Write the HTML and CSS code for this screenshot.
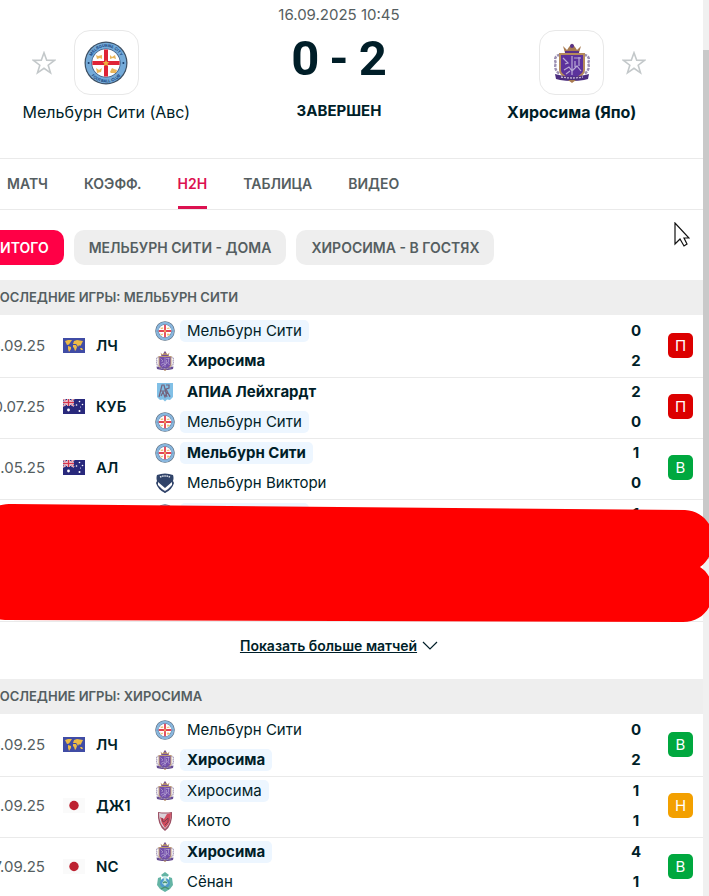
FILE: index.html
```html
<!DOCTYPE html>
<html lang="ru">
<head>
  <meta charset="UTF-8" />
  <meta name="viewport" content="width=device-width, initial-scale=1.0"/>
  <title>Мельбурн Сити - Хиросима</title>
  <link rel="stylesheet" href="styles.css">
</head>
<body>

  <!-- logos, flags and icons -->
  <svg class="sprite" aria-hidden="true">
    <symbol id="star" viewBox="0 0 24 24">
      <path d="M12 1.800l2.700 7.500 7.800.1-6.300 4.800 2.300 7.600-6.500-4.500-6.500 4.500 2.300-7.600-6.300-4.800 7.800-.1z" fill="none" stroke="#c3c8ca" stroke-width="1.600"/>
    </symbol>
    <symbol id="melbourne" viewBox="0 0 44 44">
      <circle cx="22" cy="22" r="21.5" fill="#3d4f63"/>
      <circle cx="22" cy="22" r="20.3" fill="#75abd9"/>
      <circle cx="22" cy="22" r="14.6" fill="#3f5b80"/>
      <circle cx="22" cy="22" r="13.8" fill="#fff"/>
      <path d="M20 8.4h4v27.2h-4zM8.4 20h27.2v4H8.4z" fill="#df2337"/>
      <path d="M12 14l2 1 4-1v4l-2-1-3 1zM26 14l2 2 3-2 1 4-3-1-3 1zM12 27l3 2 3-2-1 4-4 1zM26 31l2-4 2 1 3 1-1 3h-5z" fill="#eab65a"/>
      <path d="M22 18.8l1 2.2 2.4.2-1.8 1.6.6 2.4-2.2-1.2-2.2 1.2.6-2.4-1.8-1.6 2.4-.2z" fill="#eeb33d"/>
      <circle cx="4.6" cy="22" r="1" fill="#173a68"/>
      <circle cx="39.4" cy="22" r="1" fill="#173a68"/>
    </symbol>
    <symbol id="hiroshima" viewBox="0 0 36 40">
      <path d="M9 3l4 4 2-3 3-3.5L21 4l2 3 4-4-2 7H11z" fill="#a87b50"/>
      <circle cx="18" cy="3" r="2" fill="#58318b"/>
      <path d="M11 8h14v2H11z" fill="#58318b"/>
      <path d="M6 12c-5 0-6 5-4 8-2 4 0 9 4 11M30 12c5 0 6 5 4 8 2 4 0 9-4 11" fill="none" stroke="#9c8fb2" stroke-width="2.400" stroke-dasharray="3 1"/>
      <path d="M5 10h26v17c0 5-6 8-13 12C11 35 5 32 5 27z" fill="#b58a5b"/>
      <path d="M7 12h22v15c0 4-5 6-11 10C12 33 7 31 7 27z" fill="#5c329c"/>
      <path d="M9 15l5 5-3 1M18 13v19M20 15h7M21 18v6M25 14v9M10 27l5-3 3 4 5-5 4 5M12 31l4-3" fill="none" stroke="#b9a9d6" stroke-width="1.2"/>
      <path d="M1 31l4 1q13 3 26 0l4-1-1 5-4 1q-12 2-24 0l-4-1z" fill="#4b2c7e"/>
      <path d="M7 34q11 2 22 0" fill="none" stroke="#c8b8d8" stroke-width="1.3" stroke-dasharray="2 1"/>
      <path d="M14 37h8l-4 3z" fill="#a87b50"/>
    </symbol>
    <symbol id="apia" viewBox="0 0 20 20">
      <path d="M2 1h16v14l-3 3-3-.5-2 2-2-2-3 .5-3-3z" fill="#6cb6e2"/>
      <path d="M4 15L7 3h2l3 12M5 9h6M11 3h3v3l-3 1 4 8M6 14l2-4 2 5 2-5 3 4" fill="none" stroke="#5c4866" stroke-width="1.2"/>
    </symbol>
    <symbol id="victory" viewBox="0 0 20 20">
      <path d="M2 2q8-3 16 0 1 3 0 6l1 2q-2 7-9 10-7-3-9-10l1-2q-1-3 0-6z" fill="#0d2350"/>
      <path d="M3 9l7 6 7-6v3l-7 7-7-7z" fill="#fff"/>
      <path d="M5 4q5-2 10 0" fill="none" stroke="#d6dce7" stroke-width="1.500" stroke-dasharray="1.5 .7"/>
      <path d="M7 16l3 2 3-2-3 4z" fill="#0d2350"/>
    </symbol>
    <symbol id="kyoto" viewBox="0 0 20 20">
      <path d="M3 1q7 1 14 0 1 13-7 19Q2 14 3 1z" fill="#8b3149"/>
      <path d="M4 2q6 1 12 0 0 11-6 16Q4 13 4 2z" fill="#d4cbd3"/>
      <path d="M5 6l4 2 3-5 4-1q0 10-6 15Q6 12 5 6z" fill="#c92c43"/>
      <path d="M7 7l1 4 2-1 3-3v4l-3 3" fill="none" stroke="#681e32"/>
    </symbol>
    <symbol id="shonan" viewBox="0 0 20 20">
      <path d="M6 3l4-3 4 3-2 2H8zM3 6l3-1v3l8 0V5l3 1 1 7-3 4-5 3-5-3-3-4z" fill="#4aa795"/>
      <circle cx="10" cy="11" r="5" fill="#3189c4"/>
      <path d="M8 4h4l-1 4 2 3-3 3-3-3 2-3z" fill="#b9e4dd"/>
      <path d="M8 11q2-2 4 0M6 17l4-2 4 2" fill="none" stroke="#287e58" stroke-width="1.3"/>
    </symbol>
    <symbol id="world" viewBox="0 0 22 15">
      <path d="M0 0h22v15H0z" fill="#404ca5"/>
      <path d="M2 3l3-1 4 0-2 3-1 1.500-2 .5-1-2zM5 8l3 1 0 2-2 3-1-3zM10 6l1-3 3-1 6 1-1 2-1 2-1 1-1-1-1 2-1-2-1-1-2 0zM10 7l3 0 1 2-1 3-1 1-1-3-1-1zM17 10l2 0 1 2-2 0z" fill="#edbb45"/>
    </symbol>
    <symbol id="australia" viewBox="0 0 22 15">
      <path d="M0 0h22v15H0z" fill="#29297c"/>
      <path d="M0 0l11 7M11 0L0 7" stroke="#fff" stroke-width="1.8"/>
      <path d="M0 0l11 7M11 0L0 7" stroke="#d6354d" stroke-width=".7"/>
      <path d="M5.500 0v7M0 3.500h11" stroke="#fff" stroke-width="2.600"/>
      <path d="M5.500 0v7M0 3.500h11" stroke="#d6354d" stroke-width="1.500"/>
      <circle cx="5.500" cy="11" r="1.400" fill="#fff"/>
      <circle cx="16.500" cy="2.500" r=".8" fill="#fff"/>
      <circle cx="13.500" cy="6" r=".8" fill="#fff"/>
      <circle cx="19.500" cy="5.500" r=".8" fill="#fff"/>
      <circle cx="17.500" cy="8" r=".5" fill="#fff"/>
      <circle cx="16.500" cy="12" r="1" fill="#fff"/>
    </symbol>
    <symbol id="japan" viewBox="0 0 22 15">
      <path d="M0 0h22v15H0z" fill="#fafafa"/>
      <circle cx="11" cy="7.500" r="4.700" fill="#bd2231"/>
    </symbol>
  </svg>

  <div class="page">
    <main class="content">
      <header class="duel">
        <div class="team-side">
          <div class="team-logo-row">
            <button class="star-btn" aria-label="В избранное"><svg><use href="#star"/></svg></button>
            <a class="team-logo" href="#" aria-label="Мельбурн Сити">
              <svg viewBox="0 0 44 44">
                <use href="#melbourne"/>
                <path id="ringTop" d="M6 22a16 16 0 0 1 32 0" fill="none"/>
                <path id="ringBottom" d="M2.500 22a19.500 19.500 0 0 0 39 0" fill="none"/>
                <text class="ring-text"><textPath href="#ringTop" startOffset="50%">MELBOURNE CITY</textPath></text>
                <text class="ring-text"><textPath href="#ringBottom" startOffset="50%">FOOTBALL CLUB</textPath></text>
              </svg>
            </a>
          </div>
          <a class="team-name" href="#">Мельбурн Сити (Авс)</a>
        </div>
        <div class="result">
          <time class="start-time">16.09.2025 10:45</time>
          <div class="score"><span>0</span><span>-</span><span>2</span></div>
          <div class="status">Завершен</div>
        </div>
        <div class="team-side">
          <div class="team-logo-row">
            <a class="team-logo away" href="#" aria-label="Хиросима"><svg><use href="#hiroshima"/></svg></a>
            <button class="star-btn" aria-label="В избранное"><svg><use href="#star"/></svg></button>
          </div>
          <a class="team-name winner" href="#">Хиросима (Япо)</a>
        </div>
      </header>

      <nav class="tabs">
        <a href="#">Матч</a>
        <a href="#">Коэфф.</a>
        <a href="#" class="active">H2H</a>
        <a href="#">Таблица</a>
        <a href="#">Видео</a>
      </nav>

      <div class="filters">
        <button class="filter active">Итого</button>
        <button class="filter">Мельбурн Сити - дома</button>
        <button class="filter">Хиросима - в гостях</button>
      </div>

      <section>
        <h2 class="section-title">Последние игры: Мельбурн Сити</h2>
        <div class="matches">
          <table>
            <tr>
              <td class="date">16.09.25</td>
              <td class="flag"><svg><use href="#world"/></svg></td>
              <td class="league">ЛЧ</td>
              <td class="teams">
                <div class="team"><svg><use href="#melbourne"/></svg><span class="picked">Мельбурн Сити</span></div>
                <div class="team"><svg><use href="#hiroshima"/></svg><span class="win">Хиросима</span></div>
              </td>
              <td class="goals"><div>0</div><div>2</div></td>
              <td class="outcome"><span class="badge lost">П</span></td>
            </tr>
            <tr>
              <td class="date">30.07.25</td>
              <td class="flag"><svg><use href="#australia"/></svg></td>
              <td class="league">КУБ</td>
              <td class="teams">
                <div class="team"><svg><use href="#apia"/></svg><span class="win">АПИА Лейхгардт</span></div>
                <div class="team"><svg><use href="#melbourne"/></svg><span class="picked">Мельбурн Сити</span></div>
              </td>
              <td class="goals"><div>2</div><div>0</div></td>
              <td class="outcome"><span class="badge lost">П</span></td>
            </tr>
            <tr>
              <td class="date">31.05.25</td>
              <td class="flag"><svg><use href="#australia"/></svg></td>
              <td class="league">АЛ</td>
              <td class="teams">
                <div class="team"><svg><use href="#melbourne"/></svg><span class="picked win">Мельбурн Сити</span></div>
                <div class="team"><svg><use href="#victory"/></svg><span>Мельбурн Виктори</span></div>
              </td>
              <td class="goals"><div>1</div><div>0</div></td>
              <td class="outcome"><span class="badge won">В</span></td>
            </tr>
            <tr>
              <td class="date"></td>
              <td class="flag"></td>
              <td class="league"></td>
              <td class="teams">
                <div class="team"><svg><use href="#melbourne"/></svg><span class="picked">Мельбурн Сити</span></div>
                <div class="team"></div>
              </td>
              <td class="goals"><div>1</div><div></div></td>
              <td class="outcome"></td>
            </tr>
            <tr>
              <td class="date"></td>
              <td class="flag"></td>
              <td class="league"></td>
              <td class="teams"><div class="team"></div><div class="team"></div></td>
              <td class="goals"></td>
              <td class="outcome"></td>
            </tr>
          </table>
          <!-- marker strokes over the last two rows -->
          <svg class="marker" viewBox="0 0 734 118" preserveAspectRatio="none">
            <path d="M37 0L710 6C727 7 739 20 738 38C737 50 732 58 725 63C733 68 738 77 738 89C737 106 725 118 708 118L30 116C12 115 0 103 0 87V30C1 12 15 0 37 0Z" fill="#f00"/>
          </svg>
        </div>
        <div class="more">
          <a href="#">Показать больше матчей</a>
          <svg viewBox="0 0 16 10"><path d="M1 1l7 7 7-7" fill="none" stroke="#001e28" stroke-width="1.2"/></svg>
        </div>
      </section>

      <section>
        <h2 class="section-title">Последние игры: Хиросима</h2>
        <div class="matches">
          <table>
            <tr>
              <td class="date">16.09.25</td>
              <td class="flag"><svg><use href="#world"/></svg></td>
              <td class="league">ЛЧ</td>
              <td class="teams">
                <div class="team"><svg><use href="#melbourne"/></svg><span>Мельбурн Сити</span></div>
                <div class="team"><svg><use href="#hiroshima"/></svg><span class="picked win">Хиросима</span></div>
              </td>
              <td class="goals"><div>0</div><div>2</div></td>
              <td class="outcome"><span class="badge won">В</span></td>
            </tr>
            <tr>
              <td class="date">12.09.25</td>
              <td class="flag"><svg><use href="#japan"/></svg></td>
              <td class="league">ДЖ1</td>
              <td class="teams">
                <div class="team"><svg><use href="#hiroshima"/></svg><span class="picked">Хиросима</span></div>
                <div class="team"><svg><use href="#kyoto"/></svg><span>Киото</span></div>
              </td>
              <td class="goals"><div>1</div><div>1</div></td>
              <td class="outcome"><span class="badge draw">Н</span></td>
            </tr>
            <tr>
              <td class="date">07.09.25</td>
              <td class="flag"><svg><use href="#japan"/></svg></td>
              <td class="league">NC</td>
              <td class="teams">
                <div class="team"><svg><use href="#hiroshima"/></svg><span class="picked win">Хиросима</span></div>
                <div class="team"><svg><use href="#shonan"/></svg><span>Сёнан</span></div>
              </td>
              <td class="goals"><div>4</div><div>1</div></td>
              <td class="outcome"><span class="badge won">В</span></td>
            </tr>
          </table>
        </div>
      </section>
    </main>

    <div class="scrollbar"><div class="thumb"></div></div>
  </div>

  <svg class="cursor" viewBox="0 0 16 25"><path d="M1 1v21l5-5 4 7 3-2-3-6h5z" fill="#fff" stroke="#111" stroke-width="1.2"/></svg>

</body>
</html>
```

FILE: styles.css
```css
* {
  box-sizing: border-box;
}
body {
  font-family: Inter, 'Liberation Sans', sans-serif;
  margin: 0;
  height: 100vh;
  overflow: hidden;
  background: white;
  color: #001e28;
  font-size: 15px;
}
a {
  color: inherit;
  text-decoration: none;
}
button {
  font: inherit;
  border: none;
  padding: 0;
  cursor: pointer;
}
.sprite {
  display: none;
}
.page {
  display: grid;
  grid-template-columns: 1fr 6px;
  height: 100%;
}
/* the page is scrolled a little to the right */
.content {
  margin-left: -25px;
  min-width: 0;
}
.scrollbar {
  background: #f0f0f0;
  padding-top: 50px;
}
.thumb {
  height: 60%;
  background: #c9c9c9;
}

/* match header */
.duel {
  display: grid;
  grid-template-columns: 1fr 1fr 1fr;
  padding: 5px 15px 35px;
  border-bottom: 1px solid #eaeaea;
}
.team-side, .result {
  display: flex;
  flex-direction: column;
  align-items: center;
}
.team-side {
  padding-top: 25px;
}
.team-logo-row {
  display: grid;
  grid-template-columns: 1fr 65px 1fr;
  gap: 18px;
  align-items: center;
}
.team-logo {
  grid-column: 2;
  display: flex;
  align-items: center;
  justify-content: center;
  height: 65px;
  border: 1px solid #e8e8e8;
  border-radius: 16px;
}
.team-logo svg {
  width: 44px;
  height: 44px;
}
.team-logo.away svg {
  width: 36px;
  height: 40px;
}
.ring-text {
  font-size: 4px;
  font-weight: 700;
  fill: #17457f;
  text-anchor: middle;
}
.star-btn {
  background: none;
  width: 24px;
  height: 24px;
}
.star-btn svg {
  display: block;
  width: 24px;
  height: 24px;
}
.team-name {
  margin-top: 6px;
  font-size: 16px;
  line-height: 22px;
}
.winner {
  font-weight: 700;
}
.start-time {
  color: #555e61;
  line-height: 20px;
}
.score {
  display: flex;
  gap: 10px;
  font-family: Roboto, 'Liberation Sans', sans-serif;
  font-size: 49px;
  line-height: 68px;
  font-weight: 700;
}
.status {
  margin-top: 8px;
  font-size: 15px;
  line-height: 20px;
  font-weight: 700;
  text-transform: uppercase;
}

/* tabs */
.tabs {
  display: flex;
  gap: 36px;
  padding: 0 32px;
  border-bottom: 1px solid #eaeaea;
  color: #555e61;
  font-size: 14px;
  font-weight: 600;
  line-height: 50px;
  text-transform: uppercase;
}
.tabs .active {
  color: #dc1150;
  background: linear-gradient(#dc1150, #dc1150) bottom / 100% 3px no-repeat;
}
.filters {
  display: flex;
  gap: 10px;
  padding: 20px 10px 15px;
}
.filter {
  height: 35px;
  padding: 0 15px;
  border-radius: 10px;
  background: #eee;
  color: #555e61;
  font-size: 14px;
  font-weight: 600;
  text-transform: uppercase;
}
.filter.active {
  background: #ff0046;
  color: white;
}

/* last games */
.section-title {
  margin: 0;
  padding: 0 15px;
  background: #eee;
  color: #555e61;
  font-size: 13px;
  font-weight: 600;
  line-height: 35px;
  text-transform: uppercase;
}
.matches {
  position: relative;
  padding-top: 2px;
}
table {
  width: 100%;
  border-collapse: collapse;
}
td {
  padding: 3px 0 7px;
  border-bottom: 1px solid #eaeaea;
}
td svg {
  display: block;
}
.date {
  width: 70px;
  text-align: right;
  color: #555e61;
}
.flag {
  width: 51px;
  padding-left: 18px;
}
.flag svg {
  width: 22px;
  height: 15px;
}
.league {
  width: 59px;
  font-weight: 600;
}
.teams, .goals {
  padding-bottom: 5px;
}
.team {
  display: flex;
  align-items: center;
  gap: 5px;
  height: 22px;
}
.team + .team {
  margin-top: 8px;
}
.team svg {
  width: 20px;
  height: 20px;
  opacity: .85;
}
.team span {
  padding: 0 7px;
  border-radius: 5px;
  line-height: 22px;
}
.team .picked {
  background: #edf6ff;
}
.team .win {
  font-weight: 700;
}
.goals {
  width: 20px;
  text-align: center;
  font-weight: 700;
  line-height: 22px;
}
.goals div {
  height: 22px;
}
.goals div + div {
  margin-top: 8px;
}
.outcome {
  width: 57px;
  padding-right: 10px;
}
.badge {
  display: block;
  width: 25px;
  margin-left: auto;
  border-radius: 5px;
  color: white;
  line-height: 25px;
  text-align: center;
}
.won {
  background: #00a83f;
}
.lost {
  background: #dc0000;
}
.draw {
  background: #f3a000;
}
.marker {
  position: absolute;
  left: 0;
  bottom: 0;
  width: calc(100% + 6px);
  height: 118px;
}
.more {
  display: flex;
  align-items: center;
  justify-content: center;
  gap: 5px;
  height: 57px;
  padding-bottom: 10px;
}
.more a {
  font-size: 14px;
  font-weight: 600;
  text-decoration: underline;
}
.more svg {
  width: 16px;
  height: 10px;
}
.cursor {
  position: absolute;
  top: 222px;
  right: 19px;
  width: 16px;
  height: 25px;
}
```
